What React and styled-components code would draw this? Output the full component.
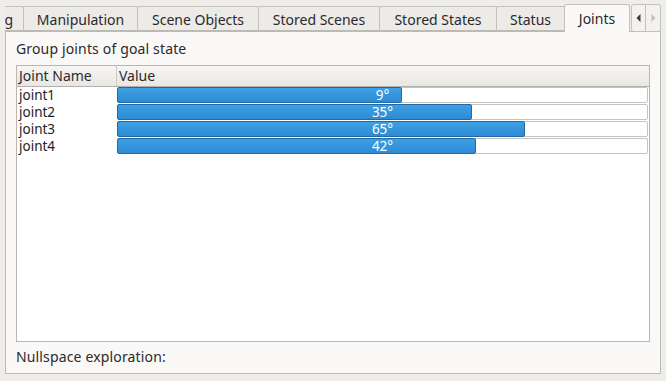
import React from "react";
import styled, { createGlobalStyle } from "styled-components";

const Global = createGlobalStyle`
  html, body { margin: 0; padding: 0; background: #efedea; }
  body { font-family: "Noto Sans", "Open Sans", sans-serif; font-size: 14px; color: #2a2a2a; }
  #root { width: 666px; height: 381px; }
`;

const Window = styled.div`
  width: 666px;
  height: 381px;
  box-sizing: border-box;
  padding: 4px 5px 0 5px;
  display: flex;
  flex-direction: column;
  background: #efedea;
`;

const TabBar = styled.div`
  height: 28px;
  display: flex;
  align-items: flex-end;
  position: relative;
  z-index: 1;
`;

const TabStrip = styled.div`
  flex: 1;
  display: flex;
  align-items: flex-end;
  overflow: hidden;
  height: 28px;
`;

const Tab = styled.div`
  flex: none;
  box-sizing: border-box;
  width: ${(p) => p.$w}px;
  margin-left: ${(p) => p.$offset || 0}px;
  height: ${(p) => (p.$active ? 28 : 25)}px;
  margin-bottom: ${(p) => (p.$active ? 0 : 1)}px;
  border: 1px solid #c4c1bd;
  border-bottom: ${(p) => (p.$active ? "none" : "1px solid #bdbab6")};
  border-radius: ${(p) => (p.$active ? "3px 3px 0 0" : "2px 2px 0 0")};
  background: ${(p) => (p.$active ? "#fbf9f7" : "#ecebe8")};
  margin-right: -1px;
  display: flex;
  align-items: center;
  justify-content: center;
  padding-top: ${(p) => (p.$active ? 0 : 1)}px;
  font-size: 14px;
  color: #2a2a2a;
  white-space: nowrap;
`;

const ScrollButtons = styled.div`
  flex: none;
  display: flex;
  height: 28px;
  margin-left: 1px;
`;

const ScrollButton = styled.div`
  width: 15px;
  box-sizing: border-box;
  height: 28px;
  border: 1px solid #c4c1bd;
  border-left: ${(p) => (p.$first ? "1px solid #c4c1bd" : "none")};
  border-radius: ${(p) => (p.$first ? "3px 0 0 3px" : "0 3px 3px 0")};
  background: #f4f2f0;
  display: flex;
  align-items: center;
  justify-content: center;
`;

const Pane = styled.div`
  flex: none;
  height: 343px;
  margin-top: -1px;
  box-sizing: border-box;
  border: 1px solid #bdbab6;
  background: #fbf9f7;
  padding: 7px 10px 0 10px;
  display: flex;
  flex-direction: column;
`;

const Label = styled.div`
  height: 20px;
  line-height: 20px;
  font-size: 14px;
  letter-spacing: 0.15px;
  color: #2a2a2a;
  margin-bottom: 6px;
`;

const Table = styled.div`
  height: 277px;
  box-sizing: border-box;
  border: 1px solid #b9b6b2;
  background: #ffffff;
  display: flex;
  flex-direction: column;
`;

const HeaderRow = styled.div`
  height: 21px;
  box-sizing: border-box;
  display: grid;
  grid-template-columns: 100px 1fr;
  background: linear-gradient(#f8f6f4, #e9e7e4);
  border-bottom: 1px solid #b3b0ac;
`;

const HeaderCell = styled.div`
  padding-left: 2px;
  line-height: 20px;
  font-size: 14px;
  color: #2a2a2a;
  border-right: ${(p) => (p.$last ? "none" : "1px solid #cfccc8")};
`;

const Row = styled.div`
  height: 17px;
  display: grid;
  grid-template-columns: 100px 1fr;
`;

const NameCell = styled.div`
  padding-left: 2px;
  height: 17px;
  line-height: 16px;
  font-size: 13.5px;
  color: #1e1e1e;
`;

const Bar = styled.div`
  position: relative;
  height: 16px;
  margin-right: 1px;
  box-sizing: border-box;
  border: 1px solid #c5c3c0;
  border-radius: 2px;
  background: #ffffff;
`;

const Fill = styled.div`
  position: absolute;
  left: -1px;
  top: -1px;
  bottom: -1px;
  box-sizing: border-box;
  border: 1px solid #2367a3;
  border-radius: 2px;
  background: linear-gradient(#3d9fe4, #2d8bd3);
`;

const BarText = styled.div`
  position: absolute;
  inset: 0;
  display: flex;
  align-items: center;
  justify-content: center;
  color: #ffffff;
  font-size: 13.5px;
  line-height: 14px;
`;

const Footer = styled.div`
  flex: 1;
  padding-top: 5px;
  line-height: 20px;
  font-size: 14px;
  letter-spacing: 0.15px;
  color: #2a2a2a;
`;

const tabs = [
  { label: "Planning", w: 80, offset: -61 },
  { label: "Manipulation", w: 115 },
  { label: "Scene Objects", w: 122 },
  { label: "Stored Scenes", w: 122 },
  { label: "Stored States", w: 118 },
  { label: "Status", w: 69 },
  { label: "Joints", w: 66, active: true },
];

const joints = [
  { name: "joint1", value: "9°", frac: 285 / 531 },
  { name: "joint2", value: "35°", frac: 355 / 531 },
  { name: "joint3", value: "65°", frac: 409 / 531 },
  { name: "joint4", value: "42°", frac: 359 / 531 },
];

export default function App() {
  return (
    <>
      <Global />
      <Window>
        <TabBar>
          <TabStrip>
            {tabs.map((t) => (
              <Tab key={t.label} $w={t.w} $offset={t.offset} $active={t.active}>
                {t.label}
              </Tab>
            ))}
          </TabStrip>
          <ScrollButtons>
            <ScrollButton $first>
              <svg width="5" height="8" viewBox="0 0 5 8">
                <path d="M4.5 0 L0.5 4 L4.5 8 Z" fill="#3a3a3a" />
              </svg>
            </ScrollButton>
            <ScrollButton>
              <svg width="5" height="8" viewBox="0 0 5 8">
                <path d="M0.5 0 L4.5 4 L0.5 8 Z" fill="#c2c0bd" />
              </svg>
            </ScrollButton>
          </ScrollButtons>
        </TabBar>
        <Pane>
          <Label>Group joints of goal state</Label>
          <Table>
            <HeaderRow>
              <HeaderCell>Joint Name</HeaderCell>
              <HeaderCell $last>Value</HeaderCell>
            </HeaderRow>
            {joints.map((j) => (
              <Row key={j.name}>
                <NameCell>{j.name}</NameCell>
                <Bar>
                  <Fill style={{ width: `calc(${(j.frac * 100).toFixed(3)}% + 1px)` }} />
                  <BarText>{j.value}</BarText>
                </Bar>
              </Row>
            ))}
          </Table>
          <Footer>Nullspace exploration:</Footer>
        </Pane>
      </Window>
    </>
  );
}
